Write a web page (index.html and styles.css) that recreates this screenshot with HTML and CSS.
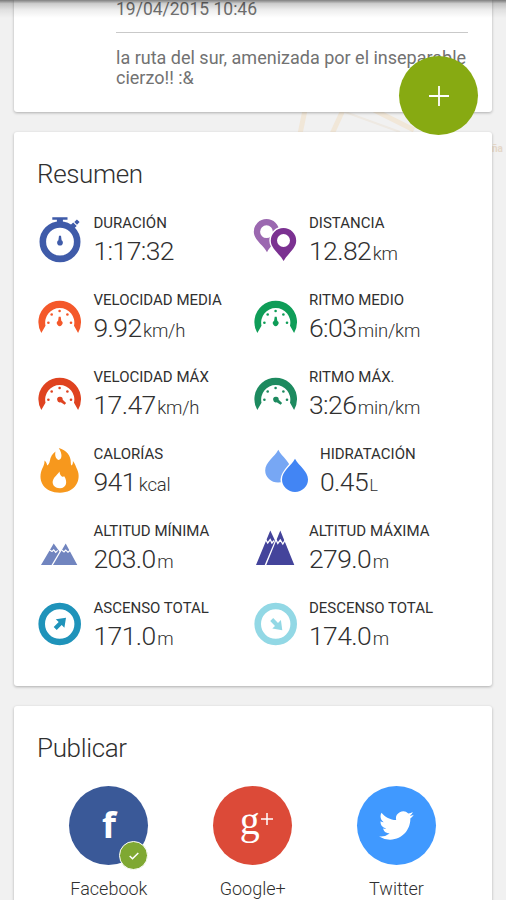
FILE: index.html
```html
<!DOCTYPE html>
<html lang="es">
<head>
<meta charset="utf-8">
<title>Resumen</title>
<link rel="stylesheet" href="styles.css">
</head>
<body>
<svg width="0" height="0" class="defs">
  <symbol id="gauge" viewBox="0 0 48 77">
    <path d="M5.3 48.9A21.3 21.3 0 1 1 42.1 48.9L38 41.8A14.6 14.6 0 1 0 9.5 41.8Z"/>
    <circle cx="12.4" cy="38.7" r="1.3"/><circle cx="15.7" cy="30.5" r="1.3"/><circle cx="23.6" cy="27" r="1.3"/><circle cx="31.4" cy="30.5" r="1.3"/><circle cx="35" cy="38.7" r="1.3"/>
  </symbol>
  <symbol id="needle" viewBox="0 0 48 77"><path d="M22.7 32.8h2l.6 4a2.8 2.8 0 1 1-3.2 0z"/></symbol>
  <symbol id="needle-max" viewBox="0 0 48 77"><path d="M22.5 31.2h2.400l.4 4.600a2.800 2.800 0 1 1-3.200 0z" transform="rotate(128 23.7 38.4)"/></symbol>
</svg>
<main class="screen">
  <svg class="map" viewBox="0 0 506 150">
    <path d="M305 110L300 134M343 110L332 134M374 110L414 130" fill="none" stroke="#f1e7d8" stroke-width="5"/>
    <path d="M345 112L400 132" fill="none" stroke="#eee9e2" stroke-width="2"/>
  </svg>
  <span class="place">ña</span>

  <section class="card note">
    <div class="date">19/04/2015 10:46</div>
    <p class="comment">la ruta del sur, amenizada por el inseparable cierzo!! :&amp;</p>
    <button class="fab" aria-label="Añadir"><svg viewBox="0 0 20 20"><path d="M10 0v20M0 10h20"/></svg></button>
  </section>

  <section class="card summary">
    <h2>Resumen</h2>
    <div class="stats">
      <div class="stat">
        <svg viewBox="0 0 48 77" fill="#3f5ba9"><circle cx="24" cy="34.7" r="17.2" fill="none" stroke="#3f5ba9" stroke-width="6.6"/><path d="M16.3 10.3h15.2v2.4h-4.6v3h-6v-3h-4.600zM34.300 18.300l2.900-2.900 3.500 3.500-2.900 2.900zM38.300 15l2.600-2.600 2.700 2.700-2.600 2.600zM23 28.700h2l.6 4.600a2.900 2.900 0 1 1-3.200 0z"/></svg>
        <div><div class="label">DURACIÓN</div><div class="value">1:17:32</div></div>
      </div>
      <div class="stat">
        <svg viewBox="0 0 48 77" fill-rule="evenodd"><path fill="#9b68b0" d="M15 45.300C12.500 39 1.800 33 1.800 24.700a12.700 12.700 0 0 1 25.400 0C27.200 33 17.500 39 15 45.300zM14.500 18.300a6.400 6.400 0 1 0 0 12.800 6.400 6.400 0 1 0 0-12.800z"/><path fill="#7b3191" stroke="#fff" stroke-width="3" paint-order="stroke" d="M31.600 54C27.500 46.500 18.800 41.500 18.800 33.700a12.700 12.700 0 0 1 25.400 0C44.200 41.500 35.700 46.500 31.600 54z"/><circle cx="31.500" cy="33.500" r="6.500" fill="#fff"/></svg>
        <div><div class="label">DISTANCIA</div><div class="value">12.82<small>km</small></div></div>
      </div>
      <div class="stat">
        <svg viewBox="0 0 48 77" fill="#f4582a"><use href="#gauge"/><use href="#needle"/></svg>
        <div><div class="label">VELOCIDAD MEDIA</div><div class="value">9.92<small>km/h</small></div></div>
      </div>
      <div class="stat">
        <svg viewBox="0 0 48 77" fill="#0f9d58"><use href="#gauge"/><use href="#needle"/></svg>
        <div><div class="label">RITMO MEDIO</div><div class="value">6:03<small>min/km</small></div></div>
      </div>
      <div class="stat">
        <svg viewBox="0 0 48 77" fill="#df4320"><use href="#gauge"/><use href="#needle-max"/></svg>
        <div><div class="label">VELOCIDAD MÁX</div><div class="value">17.47<small>km/h</small></div></div>
      </div>
      <div class="stat">
        <svg viewBox="0 0 48 77" fill="#1d8a5f"><use href="#gauge"/><use href="#needle-max"/></svg>
        <div><div class="label">RITMO MÁX.</div><div class="value">3:26<small>min/km</small></div></div>
      </div>
      <div class="stat">
        <svg viewBox="0 0 48 77" fill="#f7981d"><path d="M22.800 10C30.500 12.500 35 17.500 34.800 24.500c0 1.500.2 2.500.8 3 1-.8 1.500-2.500 1.300-4.500 2.200 2.500 2.800 5.500 4.300 8.500 4.500 10-1.500 23.200-17.200 23.200S1.800 43.500 5.500 32.500c1-3 3.200-5.500 3-10 1.500 1 2.500 3 2.600 5 1.500-1 2.300-2.500 2.700-4.500.6-4.500 3-7.500 5.700-9.500-1 4 .5 7.500 3 8.500 3.800-.5 4-6 .3-12z"/><path fill="#fff" d="M23.500 33.500c.2 3 1.200 4.500 3.600 5.500l.9-1c4 5.500 2.500 12.200-4 12.200-6 0-8.700-4.600-6.700-8.700 1.300-3 3.400-3.800 6.200-8z"/></svg>
        <div><div class="label">CALORÍAS</div><div class="value">941<small class="gap">kcal</small></div></div>
      </div>
      <div class="stat wide">
        <svg viewBox="0 0 48 77"><path fill="#77a7f4" d="M15.300 11.800C19 19 28 24.500 28 32.500a12.900 12 0 0 1-25.800 0C2.200 24.500 11.500 19 15.300 11.800z"/><path fill="#4285f4" stroke="#fff" stroke-width="3" paint-order="stroke" d="M32 20.800C36 28 45 33.500 45 41.500a13 12.500 0 0 1-26 0C19 33.500 28 28 32 20.800z"/></svg>
        <div><div class="label">HIDRATACIÓN</div><div class="value">0.45<small class="tiny">L</small></div></div>
      </div>
      <div class="stat">
        <svg viewBox="0 0 48 77"><path fill="#7185bf" d="M17.700 28.500L23.500 36.500 15.500 50H5z M29.700 28.500L41.300 50H17z"/><path d="M13.500 35l2.500 1.500 1.700-1.700 2 2.500 2-2M25.600 35l2.400 2 1.700-2 2.300 2.200 2.200-2" fill="none" stroke="#fff" stroke-width="1.200"/></svg>
        <div><div class="label">ALTITUD MÍNIMA</div><div class="value">203.0<small>m</small></div></div>
      </div>
      <div class="stat">
        <svg viewBox="0 0 48 77"><path fill="#44449b" d="M18.300 15.500L23 25.500 12.700 50H4z M28.300 15.500L42.300 50H14.300z"/><path d="M13.700 24.500l2 3.500 2.500-3.500 1.700 3.500 2.300-2.500M24 24.500l1.800 4 2.500-3.500 2.500 4 2.300-4" fill="none" stroke="#fff" stroke-width="1.300"/></svg>
        <div><div class="label">ALTITUD MÁXIMA</div><div class="value">279.0<small>m</small></div></div>
      </div>
      <div class="stat">
        <svg viewBox="0 0 48 77"><circle cx="23.700" cy="32" r="18" fill="none" stroke="#1f93ba" stroke-width="6.600"/><path fill="#1f93ba" d="M30 25.800l-1.600 10-2.700-2.700-5 5-3-3 5-5-2.900-2.900z"/></svg>
        <div><div class="label">ASCENSO TOTAL</div><div class="value">171.0<small>m</small></div></div>
      </div>
      <div class="stat">
        <svg viewBox="0 0 48 77"><circle cx="23.700" cy="32" r="18" fill="none" stroke="#92d8e5" stroke-width="6.600"/><path fill="#92d8e5" d="M30.300 38.200l-10-1.600 2.700-2.700-4.800-4.800 3-3 4.800 4.800 2.900-2.900z"/></svg>
        <div><div class="label">DESCENSO TOTAL</div><div class="value">174.0<small>m</small></div></div>
      </div>
    </div>
  </section>

  <section class="card share">
    <h2>Publicar</h2>
    <div class="networks">
      <div class="network">
        <div class="logo facebook"><span>f</span><i class="check"><svg viewBox="0 0 10 8"><path d="M.7 4l2.800 2.800L9.300 1"/></svg></i></div>
        Facebook
      </div>
      <div class="network">
        <div class="logo google"><span>g</span><svg viewBox="0 0 12 12"><path d="M6 0v12M0 6h12"/></svg></div>
        Google+
      </div>
      <div class="network">
        <div class="logo twitter"><svg viewBox="0 2 24 20"><path d="M23.950 4.570a10 10 0 0 1-2.820.770 4.960 4.960 0 0 0 2.160-2.720c-.950.550-2 .950-3.130 1.180a4.920 4.920 0 0 0-8.380 4.480C7.690 8.090 4.070 6.130 1.640 3.160a4.820 4.820 0 0 0-.670 2.480c0 1.710.870 3.210 2.190 4.100a4.900 4.900 0 0 1-2.230-.620v.060a4.920 4.920 0 0 0 3.950 4.830 5 5 0 0 1-2.210.080 4.940 4.940 0 0 0 4.600 3.420A9.870 9.870 0 0 1 0 19.540a13.990 13.990 0 0 0 7.550 2.210c9.050 0 14-7.500 14-13.980 0-.210 0-.420-.020-.630a9.940 9.940 0 0 0 2.420-2.570z"/></svg></div>
        Twitter
      </div>
    </div>
  </section>
  <div class="topshade"></div>
</main>
</body>
</html>
```
FILE: styles.css
```css
* { box-sizing: border-box; }
body { margin: 0; font-family: Roboto, "Liberation Sans", sans-serif; color: #303030; }
.defs { position: absolute; }
.screen { position: relative; height: 900px; overflow: hidden; background: #f1f1f1; padding: 0 14px; }
.map { position: absolute; left: 0; top: 0; width: 506px; height: 150px; }
.place { position: absolute; left: 492px; top: 143px; font-size: 10px; line-height: 12px; font-weight: 700; color: #e5d7c8; }
.card { position: relative; background: #fff; border-radius: 3px; box-shadow: 0 1px 3px rgba(0,0,0,.28); margin-bottom: 20px; }
.note { height: 112px; padding: 0 24px 0 102px; border-radius: 0 0 3px 3px; color: #727272; font-size: 17.500px; }
.date { height: 33px; line-height: 19px; border-bottom: 1px solid #c9c9c9; }
.comment { margin: 15px -10px 0 0; line-height: 20px; font-size: 18px; }
.fab { position: absolute; left: 385px; top: 56px; z-index: 2; width: 79px; height: 79px; padding: 0; border: 0; border-radius: 50%; background: #87aa12; display: grid; place-items: center; }
.fab svg { width: 20px; height: 20px; stroke: #fff; stroke-width: 1.800; }
h2 { margin: 0; padding-left: 23px; font-size: 26px; line-height: 30px; font-weight: 300; letter-spacing: -.35px; }
.summary { height: 554px; padding-top: 27px; }
.stats { display: grid; grid-template-columns: 215.500px 1fr; grid-auto-rows: 77px; margin: 18px 0 0 22px; }
.stat { display: flex; gap: 9.500px; white-space: nowrap; }
.stat > svg { width: 48px; height: 77px; flex: none; }
.wide { padding-left: 11px; }
.label { font-size: 15px; line-height: 20px; margin-top: 6px; }
.value { font-size: 26.500px; line-height: 34px; font-weight: 300; letter-spacing: -.6px; margin-top: 1px; }
.value small { font-size: 18.500px; margin-left: 1.500px; letter-spacing: -.2px; }
.value .gap { margin-left: 3px; }
.value .tiny { font-size: 16px; }
.share { height: 260px; padding-top: 27px; }
.networks { display: grid; grid-template-columns: repeat(3, 143.800px); margin: 23px 0 0 23px; }
.network { display: flex; flex-direction: column; align-items: center; gap: 13px; font-size: 18px; line-height: 22px; font-weight: 300; }
.logo { position: relative; width: 79px; height: 79px; border-radius: 50%; color: #fff; display: flex; align-items: center; justify-content: center; }
.facebook { background: #3a5998; font: 700 36px/40px "Open Sans", sans-serif; }
.facebook > span { margin-top: -2px; }
.google { background: #dc4a38; font: 400 40px/44px "Liberation Serif", serif; }
.google span { margin-top: -9px; margin-left: 7px; }
.google svg { width: 12px; height: 12px; margin: -13px 0 0 1px; stroke: #fff; stroke-width: 1.500; }
.twitter { background: #4099ff; }
.twitter svg { width: 35px; height: 29px; fill: #fff; }
.check { position: absolute; left: 50px; top: 55px; width: 29px; height: 29px; border: 1.500px solid #fff; border-radius: 50%; background: #7fa832; display: grid; place-items: center; }
.check svg { width: 10px; height: 8px; fill: none; stroke: #fff; stroke-width: 1.500; }
.topshade { position: absolute; left: 0; right: 0; top: 0; height: 18px; background: linear-gradient(rgba(0,0,0,.5), rgba(0,0,0,.2) 20%, rgba(0,0,0,.07) 55%, transparent); }
```
